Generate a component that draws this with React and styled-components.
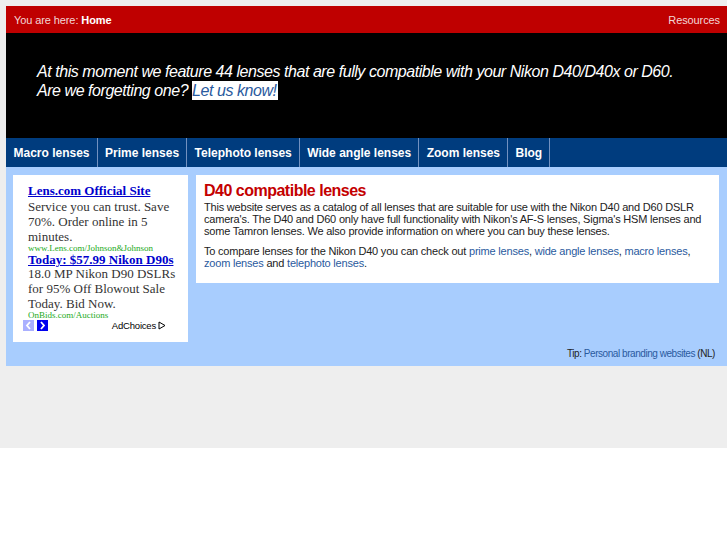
import React from 'react';
import styled, { createGlobalStyle } from 'styled-components';

const GlobalStyle = createGlobalStyle`
    html, body {
        margin: 0;
        padding: 0;
        background: #ffffff;
    }
    body {
        font-family: "Liberation Sans", Arial, sans-serif;
        overflow: hidden;
    }
`;

const Page = styled.div`
    background: #eeeeee;
    padding: 6px 0 82px 6px;
`;

const Wrap = styled.div`
    display: flex;
    flex-direction: column;
`;

const TopBar = styled.div`
    display: flex;
    justify-content: space-between;
    align-items: center;
    height: 27px;
    padding: 0 7px 0 8px;
    background: #bf0000;
    color: #f2d6d6;
    font-size: 11px;
    letter-spacing: -0.1px;

    b {
        color: #ffffff;
    }
`;

const Banner = styled.div`
    background: #000000;
    height: 105px;
    display: flex;
    align-items: center;
    padding: 0 0 9px 31px;
    box-sizing: border-box;
    color: #ffffff;
    font-size: 16px;
    font-style: italic;
    line-height: 19px;
    letter-spacing: -0.45px;
`;

const BannerText = styled.p`
    margin: 0;

    a {
        background: #ffffff;
        color: #2a5a9e;
        text-decoration: none;
        padding: 1px 1px 1px 0;
    }
`;

const Nav = styled.nav`
    display: flex;
    height: 29px;
    background: #003c7e;
`;

const NavItem = styled.a`
    display: flex;
    align-items: center;
    padding: 0 7px 0 7.5px;
    color: #ffffff;
    font-size: 12px;
    font-weight: bold;
    text-decoration: none;
    border-right: 1px solid #7291c0;
`;

const Content = styled.div`
    background: #a8cdfe;
    padding: 8px 8px 6px 7px;
    display: flex;
    flex-direction: column;
`;

const Columns = styled.div`
    display: flex;
    align-items: flex-start;
    gap: 8px;
`;

const AdBox = styled.div`
    width: 160px;
    flex-shrink: 0;
    background: #ffffff;
    padding: 7px 0 11px 15px;
    font-family: "Liberation Serif", "Times New Roman", serif;
    font-size: 13px;
    line-height: 15px;
    color: #333333;
`;

const AdTitle = styled.a`
    display: block;
    color: #0000cc;
    font-weight: bold;
    text-decoration: underline;
    line-height: ${p => p.$lh}px;
`;

const AdText = styled.div`
    padding-right: 4px;
`;

const AdUrl = styled.div`
    color: #22aa22;
    font-size: 9px;
    line-height: ${p => p.$lh}px;
`;

const AdFooter = styled.div`
    display: flex;
    align-items: center;
    justify-content: space-between;
    height: 11px;
    margin-left: -5px;
    padding: 0 22px 0 0;
    line-height: 11px;
`;

const Arrows = styled.div`
    display: flex;
    gap: 3px;
`;

const Arrow = styled.span`
    width: 11px;
    height: 11px;
    display: flex;
    align-items: center;
    justify-content: center;
    background: ${p => (p.$active ? '#0000ee' : '#aab0ff')};
`;

const AdChoices = styled.span`
    display: flex;
    align-items: center;
    gap: 2px;
    font-family: "Liberation Sans", Arial, sans-serif;
    font-size: 9.5px;
    letter-spacing: -0.2px;
    color: #000000;
`;

const Main = styled.div`
    flex: 1;
    background: #ffffff;
    padding: 6px 8px 14px 8px;
    color: #222222;
    font-size: 11px;
    line-height: 12px;
    letter-spacing: -0.2px;
`;

const Title = styled.h1`
    margin: 0 0 1px;
    color: #c40000;
    font-size: 16px;
    line-height: 19px;
    letter-spacing: -0.5px;
`;

const Para = styled.p`
    margin: 0 0 8px;

    &:last-child {
        margin-bottom: 0;
    }

    a {
        color: #2a5a9e;
        text-decoration: none;
    }
`;

const Tip = styled.div`
    text-align: right;
    margin-top: 6px;
    padding-right: 4px;
    font-size: 10px;
    line-height: 12px;
    letter-spacing: -0.45px;
    color: #222222;

    a {
        color: #2a5a9e;
        text-decoration: none;
    }
`;

const Chevron = ({ dir }) => (
    <svg width="7" height="9" viewBox="0 0 7 9">
        <path
            d={dir === 'left' ? 'M5 1 L2 4.5 L5 8' : 'M2 1 L5 4.5 L2 8'}
            fill="none"
            stroke="#ffffff"
            strokeWidth="1.8"
        />
    </svg>
);

const navItems = ['Macro lenses', 'Prime lenses', 'Telephoto lenses', 'Wide angle lenses', 'Zoom lenses', 'Blog'];

export default function App() {
    return (
        <>
            <GlobalStyle />
            <Page>
                <Wrap>
                    <TopBar>
                        <span>You are here: <b>Home</b></span>
                        <span>Resources</span>
                    </TopBar>
                    <Banner>
                        <BannerText>
                            At this moment we feature 44 lenses that are fully compatible with your Nikon D40/D40x or D60.
                            <br />
                            Are we forgetting one? <a href="#">Let us know!</a>
                        </BannerText>
                    </Banner>
                    <Nav>
                        {navItems.map(item => (
                            <NavItem key={item} href="#">{item}</NavItem>
                        ))}
                    </Nav>
                    <Content>
                        <Columns>
                            <AdBox>
                                <AdTitle href="#" $lh={17}>Lens.com Official Site</AdTitle>
                                <AdText>Service you can trust. Save 70%. Order online in 5 minutes.</AdText>
                                <AdUrl $lh={9}>www.Lens.com/Johnson&amp;Johnson</AdUrl>
                                <AdTitle href="#" $lh={13}>Today: $57.99 Nikon D90s</AdTitle>
                                <AdText>18.0 MP Nikon D90 DSLRs for 95% Off Blowout Sale Today. Bid Now.</AdText>
                                <AdUrl $lh={9}>OnBids.com/Auctions</AdUrl>
                                <AdFooter>
                                    <Arrows>
                                        <Arrow><Chevron dir="left" /></Arrow>
                                        <Arrow $active><Chevron dir="right" /></Arrow>
                                    </Arrows>
                                    <AdChoices>
                                        AdChoices
                                        <svg width="8" height="9" viewBox="0 0 8 9">
                                            <path d="M1 1 L7 4.5 L1 8 Z" fill="none" stroke="#000" strokeWidth="1" />
                                        </svg>
                                    </AdChoices>
                                </AdFooter>
                            </AdBox>
                            <Main>
                                <Title>D40 compatible lenses</Title>
                                <Para>
                                    This website serves as a catalog of all lenses that are suitable for use with the Nikon D40 and D60 DSLR
                                    camera's. The D40 and D60 only have full functionality with Nikon's AF-S lenses, Sigma's HSM lenses and
                                    some Tamron lenses. We also provide information on where you can buy these lenses.
                                </Para>
                                <Para>
                                    To compare lenses for the Nikon D40 you can check out <a href="#">prime lenses</a>,{' '}
                                    <a href="#">wide angle lenses</a>, <a href="#">macro lenses</a>, <a href="#">zoom lenses</a> and{' '}
                                    <a href="#">telephoto lenses</a>.
                                </Para>
                            </Main>
                        </Columns>
                        <Tip>
                            Tip: <a href="#">Personal branding websites</a> (NL)
                        </Tip>
                    </Content>
                </Wrap>
            </Page>
        </>
    );
}
